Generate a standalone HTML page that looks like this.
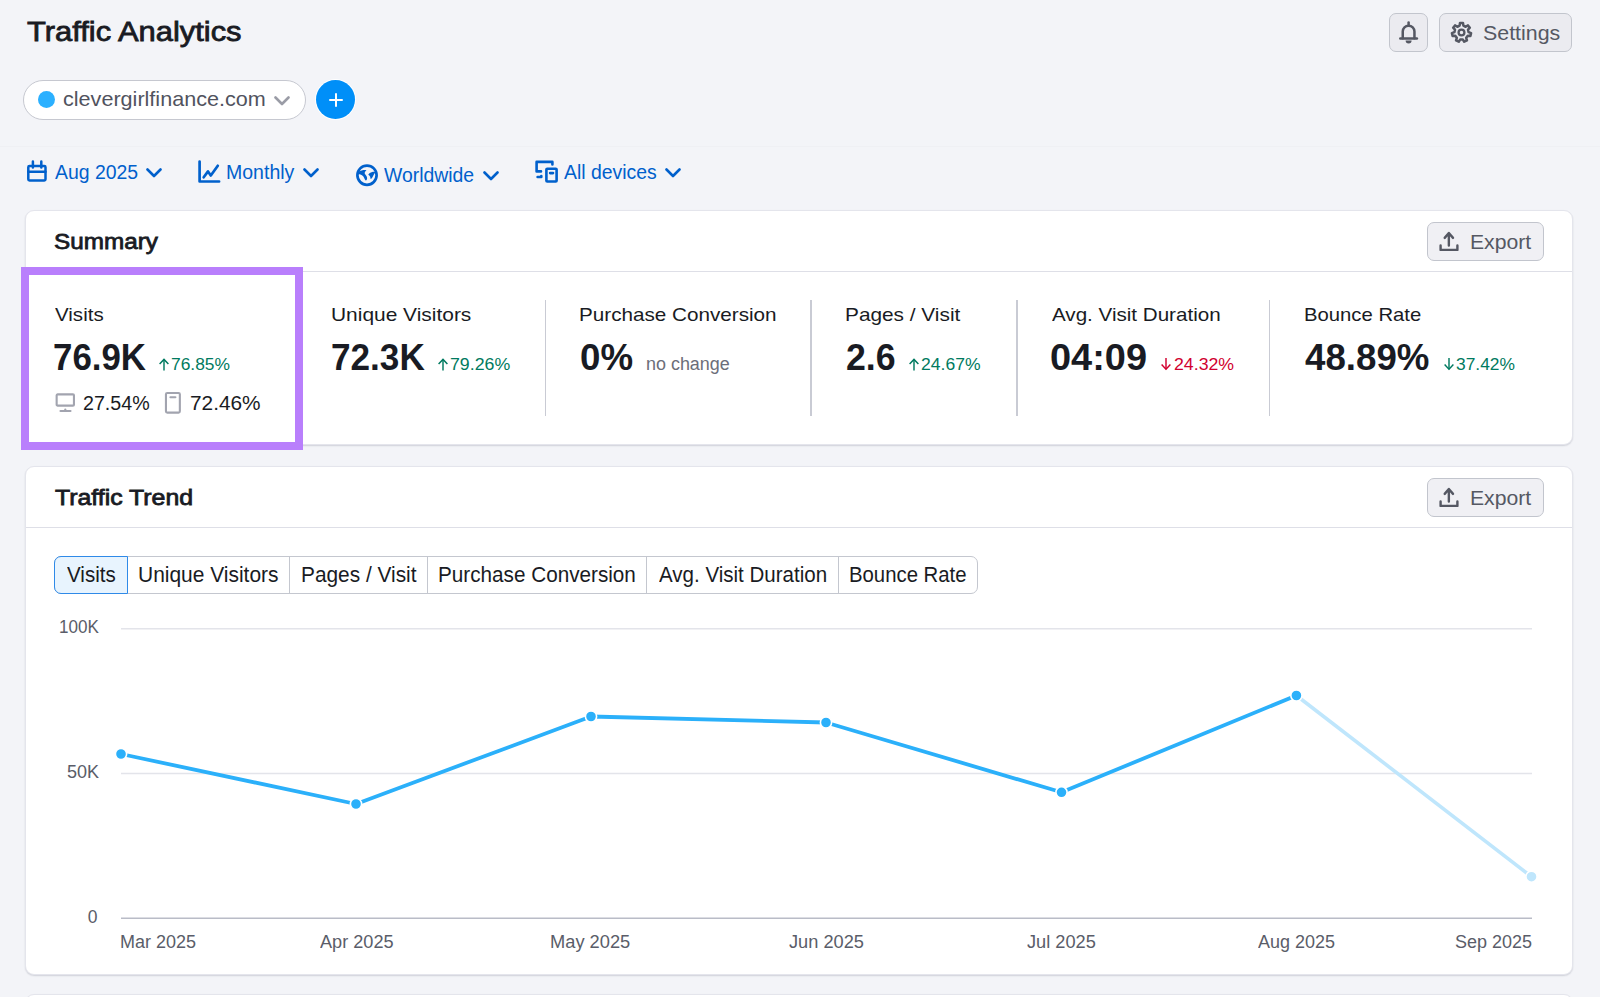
<!DOCTYPE html>
<html><head><meta charset="utf-8"><title>Traffic Analytics</title><style>
html,body{margin:0;padding:0}
body{width:1600px;height:997px;background:#f3f4f8;position:relative;overflow:hidden;font-family:"Liberation Sans",sans-serif}
.t{position:absolute;white-space:pre;line-height:1;transform-origin:0 0}
.a{position:absolute;display:block}
.card{position:absolute;left:25px;width:1546px;background:#fff;border:1px solid #e4e5ec;border-radius:9px;box-shadow:0 1px 1.5px rgba(30,35,60,0.16)}
.hsep{position:absolute;left:26px;width:1546px;height:1.3px;background:#dedfe7}
.vsep{position:absolute;top:300px;width:1.5px;height:116px;background:#c9cbd4}
.btn{position:absolute;background:#ebebf0;border:1.3px solid #c2c5cd;border-radius:7px;box-sizing:border-box}
</style></head><body>
<div class="a" style="left:0;top:146px;width:1600px;height:1px;background:#eff0f4"></div>
<div class="btn" style="left:1389px;top:13px;width:39px;height:39px"></div>
<div class="btn" style="left:1439px;top:13px;width:133px;height:39px"></div>
<div class="a" style="left:23px;top:79.5px;width:283px;height:40px;box-sizing:border-box;background:#fff;border:1.5px solid #c6c8d0;border-radius:20px"></div>
<div class="a" style="left:38px;top:91px;width:17px;height:17px;border-radius:50%;background:#2bb0ff"></div>
<div class="a" style="left:316px;top:80px;width:39px;height:39px;border-radius:50%;background:#008ff8;box-shadow:0 0 0 1px #fff"></div>
<div class="a" style="left:328.5px;top:98.7px;width:14.5px;height:2px;background:#fff;border-radius:1px"></div>
<div class="a" style="left:334.7px;top:92.5px;width:2px;height:14.5px;background:#fff;border-radius:1px"></div>
<svg class="a" style="left:274px;top:96px" width="16" height="10" viewBox="0 0 16 10"><path d="M1.5 1.5 L8 8 L14.5 1.5" fill="none" stroke="#9a9ca6" stroke-width="2.6" stroke-linecap="round" stroke-linejoin="round"/></svg>
<svg class="a" style="left:145.5px;top:168px" width="16" height="10" viewBox="0 0 16 10"><path d="M1.5 1.5 L8 8 L14.5 1.5" fill="none" stroke="#0060cc" stroke-width="2.6" stroke-linecap="round" stroke-linejoin="round"/></svg>
<svg class="a" style="left:303px;top:168px" width="16" height="10" viewBox="0 0 16 10"><path d="M1.5 1.5 L8 8 L14.5 1.5" fill="none" stroke="#0060cc" stroke-width="2.6" stroke-linecap="round" stroke-linejoin="round"/></svg>
<svg class="a" style="left:483px;top:171px" width="16" height="10" viewBox="0 0 16 10"><path d="M1.5 1.5 L8 8 L14.5 1.5" fill="none" stroke="#0060cc" stroke-width="2.6" stroke-linecap="round" stroke-linejoin="round"/></svg>
<svg class="a" style="left:665px;top:168px" width="16" height="10" viewBox="0 0 16 10"><path d="M1.5 1.5 L8 8 L14.5 1.5" fill="none" stroke="#0060cc" stroke-width="2.6" stroke-linecap="round" stroke-linejoin="round"/></svg>
<div class="card" style="top:210px;height:233px"></div>
<div class="hsep" style="top:271px"></div>
<div class="btn" style="left:1427px;top:222px;width:117px;height:39px;background:#f0f0f4"></div>
<div class="vsep" style="left:544.5px"></div>
<div class="vsep" style="left:810px"></div>
<div class="vsep" style="left:1016px"></div>
<div class="vsep" style="left:1268.5px"></div>
<div class="a" style="left:21px;top:267px;width:266px;height:167px;border:8px solid #b97ffc"></div>
<div class="card" style="top:466px;height:507px"></div>
<div class="hsep" style="top:527px"></div>
<div class="btn" style="left:1427px;top:478px;width:117px;height:39px;background:#f0f0f4"></div>
<div class="a" style="left:54px;top:556px;width:924px;height:38px;box-sizing:border-box;border:1px solid #c4c7cf;border-radius:7px"></div>
<div class="a" style="left:54px;top:556px;width:74px;height:38px;box-sizing:border-box;border:1.5px solid #2f8ae8;background:#e8f4fe;border-radius:7px 0 0 7px"></div>
<div class="a" style="left:289px;top:556px;width:1px;height:38px;background:#c4c7cf"></div>
<div class="a" style="left:427px;top:556px;width:1px;height:38px;background:#c4c7cf"></div>
<div class="a" style="left:646px;top:556px;width:1px;height:38px;background:#c4c7cf"></div>
<div class="a" style="left:838px;top:556px;width:1px;height:38px;background:#c4c7cf"></div>
<div class="card" style="top:994px;height:40px"></div>
<svg class="a" style="left:0;top:0" width="1600" height="997" viewBox="0 0 1600 997">
<line x1="121" y1="628.75" x2="1532" y2="628.75" stroke="#e3e4ea" stroke-width="1.5"/>
<line x1="121" y1="773.5" x2="1532" y2="773.5" stroke="#e3e4ea" stroke-width="1.5"/>
<line x1="121" y1="918.2" x2="1532" y2="918.2" stroke="#b9bcc7" stroke-width="1.5"/>
<polyline points="1296.4,695.5 1531.5,876.7" fill="none" stroke="#bfe6fc" stroke-width="3.6"/>
<polyline points="121,754 356,804 591,716.5 826,722.5 1061.5,792.3 1296.4,695.5" fill="none" stroke="#2bb0fa" stroke-width="3.8" stroke-linejoin="round"/>
<circle cx="121" cy="754" r="5.6" fill="#2bb0fa" stroke="#fff" stroke-width="1.6"/><circle cx="356" cy="804" r="5.6" fill="#2bb0fa" stroke="#fff" stroke-width="1.6"/><circle cx="591" cy="716.5" r="5.6" fill="#2bb0fa" stroke="#fff" stroke-width="1.6"/><circle cx="826" cy="722.5" r="5.6" fill="#2bb0fa" stroke="#fff" stroke-width="1.6"/><circle cx="1061.5" cy="792.3" r="5.6" fill="#2bb0fa" stroke="#fff" stroke-width="1.6"/><circle cx="1296.4" cy="695.5" r="5.6" fill="#2bb0fa" stroke="#fff" stroke-width="1.6"/><circle cx="1531.5" cy="876.7" r="5.6" fill="#bfe6fc" stroke="#fff" stroke-width="1.6"/></svg>
<svg class="a" style="left:1398px;top:20px" width="22" height="25" viewBox="0 0 22 25"><g fill="none" stroke="#555863" stroke-width="2.5" stroke-linecap="round"><path d="M10.6 2.4 V4.2"/><path d="M4.75 18.2 V11.6 A5.85 5.85 0 0 1 16.45 11.6 V18.2"/><path d="M2.3 18.5 H18.9"/></g><path d="M7.6 20.6 A3 2.9 0 0 0 13.6 20.6 Z" fill="#555863"/></svg><svg class="a" style="left:1449.5px;top:21.25px" width="23" height="23" viewBox="0 0 23 23"><path d="M9.60 4.66 L10.00 2.02 L13.00 2.02 L13.40 4.66 L15.67 5.75 L17.98 4.41 L19.85 6.76 L18.03 8.72 L18.59 11.17 L21.08 12.15 L20.41 15.07 L17.75 14.87 L16.18 16.84 L16.97 19.39 L14.26 20.69 L12.76 18.49 L10.24 18.49 L8.74 20.69 L6.03 19.39 L6.82 16.84 L5.25 14.87 L2.59 15.07 L1.92 12.15 L4.41 11.17 L4.97 8.72 L3.15 6.76 L5.02 4.41 L7.33 5.75 Z" fill="none" stroke="#555863" stroke-width="2.5" stroke-linejoin="round"/><circle cx="11.5" cy="11.5" r="2.9" fill="none" stroke="#555863" stroke-width="2.3"/></svg><svg class="a" style="left:26px;top:159px" width="22" height="24" viewBox="0 0 22 24"><g fill="none" stroke="#0060cc" stroke-width="2.5" stroke-linecap="round"><rect x="2.3" y="7.1" width="17.2" height="14.3" rx="1.2"/><path d="M2.3 12.7 H19.5"/><path d="M6.9 2.5 V8.5 M15.3 2.5 V8.5"/></g></svg><svg class="a" style="left:196px;top:159px" width="26" height="26" viewBox="0 0 26 26"><g fill="none" stroke="#0060cc" stroke-width="2.7" stroke-linecap="round" stroke-linejoin="round"><path d="M3.6 2.6 V22.5 H23.1"/><path d="M7.7 18.3 L12 12.4 L14.8 16.5 L21.8 6.8"/></g></svg><svg class="a" style="left:355px;top:163px" width="24" height="24" viewBox="0 0 24 24"><circle cx="12" cy="12.2" r="9.6" fill="none" stroke="#0060cc" stroke-width="2.7"/><path d="M3.5 8.6 C6 7.6 8.5 6.8 11.5 7.2 C10.2 8.3 9.4 9.4 9.8 10.8 C10.8 12.2 12 13.2 12.1 15 C12.1 16.3 11.6 17.6 10.8 17.6 C10 17.3 9.3 15.2 8.4 13.6 C7.2 11.7 5 11.2 3.2 11.2 Z" fill="#0060cc"/><path d="M13.3 11.8 C14 10.3 15.4 9.3 17.2 8.9 C18.6 8.6 19.8 8.7 20.3 9.2 C19.3 10.6 18.5 12.4 17.6 13.9 C17 15.1 16.2 15.9 15.6 15.9 C15.2 14.6 15.6 13.2 13.3 11.8 Z" fill="#0060cc"/></svg><svg class="a" style="left:534px;top:159px" width="26" height="26" viewBox="0 0 26 26"><g fill="none" stroke="#0060cc" stroke-width="2.6" stroke-linecap="round" stroke-linejoin="round"><path d="M18.4 5.4 V2.9 H2.6 V12.4 H7"/><path d="M3.6 18 H7.3 V17"/><rect x="12.4" y="9.7" width="10.2" height="12.8" rx="0.8"/><path d="M16.1 14.1 H19"/></g></svg><svg class="a" style="left:1438px;top:231px" width="22" height="22" viewBox="0 0 22 22"><g fill="none" stroke="#555863" stroke-width="2.4" stroke-linecap="round" stroke-linejoin="round"><path d="M10.85 14.6 V2.2 M6.7 6.9 L10.85 2 L15 6.9"/><path d="M2.6 14.4 V18.9 H19.4 V14.4"/></g></svg><svg class="a" style="left:1438px;top:487px" width="22" height="22" viewBox="0 0 22 22"><g fill="none" stroke="#555863" stroke-width="2.4" stroke-linecap="round" stroke-linejoin="round"><path d="M10.85 14.6 V2.2 M6.7 6.9 L10.85 2 L15 6.9"/><path d="M2.6 14.4 V18.9 H19.4 V14.4"/></g></svg><svg class="a" style="left:54px;top:391px" width="23" height="23" viewBox="0 0 23 23"><g fill="none" stroke="#a2a4af" stroke-width="2.1" stroke-linecap="round" stroke-linejoin="round"><rect x="2.65" y="3.35" width="17.3" height="11.3" rx="1"/><path d="M6.5 20 H16.5"/><path d="M11.3 18.6 V20"/></g></svg><svg class="a" style="left:163px;top:390px" width="20" height="26" viewBox="0 0 20 26"><g fill="none" stroke="#a2a4af" stroke-width="2.1" stroke-linecap="round" stroke-linejoin="round"><rect x="2.95" y="3.05" width="13.9" height="19.6" rx="1.3"/><path d="M7.4 7.2 H12.4"/></g></svg><svg class="a" style="left:159.1px;top:357.5px" width="10" height="13" viewBox="0 0 10 13"><g fill="none" stroke="#007a60" stroke-width="1.45" stroke-linecap="butt" stroke-linejoin="miter"><path d="M5 1.2 V12.5"/><path d="M0.6 6.1 L5 1.4 L9.4 6.1"/></g></svg><svg class="a" style="left:437.6px;top:357.5px" width="10" height="13" viewBox="0 0 10 13"><g fill="none" stroke="#007a60" stroke-width="1.45" stroke-linecap="butt" stroke-linejoin="miter"><path d="M5 1.2 V12.5"/><path d="M0.6 6.1 L5 1.4 L9.4 6.1"/></g></svg><svg class="a" style="left:909.3px;top:357.5px" width="10" height="13" viewBox="0 0 10 13"><g fill="none" stroke="#007a60" stroke-width="1.45" stroke-linecap="butt" stroke-linejoin="miter"><path d="M5 1.2 V12.5"/><path d="M0.6 6.1 L5 1.4 L9.4 6.1"/></g></svg><svg class="a" style="left:1161.4px;top:357.5px" width="10" height="13" viewBox="0 0 10 13"><g fill="none" stroke="#d1002f" stroke-width="1.45" stroke-linecap="butt" stroke-linejoin="miter"><path d="M5 0 V11.3"/><path d="M0.6 6.6 L5 11.3 L9.4 6.6"/></g></svg><svg class="a" style="left:1443.6px;top:357.5px" width="10" height="13" viewBox="0 0 10 13"><g fill="none" stroke="#007a60" stroke-width="1.45" stroke-linecap="butt" stroke-linejoin="miter"><path d="M5 0 V11.3"/><path d="M0.6 6.6 L5 11.3 L9.4 6.6"/></g></svg>
<span class="t" style="left:27.2px;top:18.3px;font-size:27.5px;transform:scaleX(1.123);color:#191b23;font-weight:400;-webkit-text-stroke:0.8px #191b23">Traffic Analytics</span><span class="t" style="left:63.1px;top:90.4px;font-size:19.75px;transform:scaleX(1.093);color:#51535e;font-weight:400">clevergirlfinance.com</span><span class="t" style="left:54.5px;top:162.0px;font-size:20.25px;transform:scaleX(0.959);color:#0060cc;font-weight:400">Aug 2025</span><span class="t" style="left:225.5px;top:162.0px;font-size:20.25px;transform:scaleX(0.964);color:#0060cc;font-weight:400">Monthly</span><span class="t" style="left:384.0px;top:164.0px;font-size:21.0px;transform:scaleX(0.923);color:#0060cc;font-weight:400">Worldwide</span><span class="t" style="left:564.0px;top:162.0px;font-size:20.25px;transform:scaleX(0.958);color:#0060cc;font-weight:400">All devices</span><span class="t" style="left:1482.7px;top:21.8px;font-size:21.0px;transform:scaleX(1.018);color:#555863;font-weight:400">Settings</span><span class="t" style="left:53.8px;top:230.5px;font-size:22.0px;transform:scaleX(1.104);color:#191b23;font-weight:400;-webkit-text-stroke:0.8px #191b23">Summary</span><span class="t" style="left:1470.2px;top:231.8px;font-size:20.5px;transform:scaleX(1.033);color:#555863;font-weight:400">Export</span><span class="t" style="left:55.0px;top:305.5px;font-size:18.5px;transform:scaleX(1.109);color:#191b23;font-weight:400">Visits</span><span class="t" style="left:53.0px;top:340.0px;font-size:36.0px;transform:scaleX(0.968);color:#191b23;font-weight:700">76.9K</span><span class="t" style="left:171.2px;top:356.5px;font-size:16.75px;transform:scaleX(1.038);color:#007a60;font-weight:400">76.85%</span><span class="t" style="left:82.5px;top:392.7px;font-size:20.5px;transform:scaleX(0.959);color:#191b23;font-weight:400">27.54%</span><span class="t" style="left:189.7px;top:392.7px;font-size:20.5px;transform:scaleX(1.015);color:#191b23;font-weight:400">72.46%</span><span class="t" style="left:330.7px;top:305.5px;font-size:18.5px;transform:scaleX(1.131);color:#191b23;font-weight:400">Unique Visitors</span><span class="t" style="left:330.7px;top:340.0px;font-size:36.0px;transform:scaleX(0.976);color:#191b23;font-weight:700">72.3K</span><span class="t" style="left:449.7px;top:356.5px;font-size:16.75px;transform:scaleX(1.06);color:#007a60;font-weight:400">79.26%</span><span class="t" style="left:579.2px;top:305.5px;font-size:18.5px;transform:scaleX(1.117);color:#191b23;font-weight:400">Purchase Conversion</span><span class="t" style="left:580.2px;top:340.0px;font-size:36.0px;transform:scaleX(1.02);color:#191b23;font-weight:700">0%</span><span class="t" style="left:645.5px;top:354.5px;font-size:18.0px;transform:scaleX(0.996);color:#6c6e79;font-weight:400">no change</span><span class="t" style="left:845.2px;top:305.5px;font-size:18.5px;transform:scaleX(1.125);color:#191b23;font-weight:400">Pages / Visit</span><span class="t" style="left:846.2px;top:340.0px;font-size:36.0px;transform:scaleX(0.992);color:#191b23;font-weight:700">2.6</span><span class="t" style="left:921.4px;top:356.5px;font-size:16.75px;transform:scaleX(1.047);color:#007a60;font-weight:400">24.67%</span><span class="t" style="left:1052.3px;top:305.5px;font-size:18.5px;transform:scaleX(1.113);color:#191b23;font-weight:400">Avg. Visit Duration</span><span class="t" style="left:1050.3px;top:340.0px;font-size:36.0px;transform:scaleX(1.054);color:#191b23;font-weight:700">04:09</span><span class="t" style="left:1173.5px;top:356.5px;font-size:16.75px;transform:scaleX(1.058);color:#d1002f;font-weight:400">24.32%</span><span class="t" style="left:1303.7px;top:305.5px;font-size:18.5px;transform:scaleX(1.096);color:#191b23;font-weight:400">Bounce Rate</span><span class="t" style="left:1304.7px;top:340.0px;font-size:36.0px;transform:scaleX(1.019);color:#191b23;font-weight:700">48.89%</span><span class="t" style="left:1455.7px;top:356.5px;font-size:16.75px;transform:scaleX(1.038);color:#007a60;font-weight:400">37.42%</span><span class="t" style="left:55.0px;top:486.6px;font-size:22.25px;transform:scaleX(1.116);color:#191b23;font-weight:400;-webkit-text-stroke:0.8px #191b23">Traffic Trend</span><span class="t" style="left:66.9px;top:565.4px;font-size:21.25px;transform:scaleX(0.966);color:#191b23;font-weight:400">Visits</span><span class="t" style="left:137.7px;top:565.4px;font-size:21.25px;transform:scaleX(0.986);color:#191b23;font-weight:400">Unique Visitors</span><span class="t" style="left:300.6px;top:565.4px;font-size:21.25px;transform:scaleX(0.981);color:#191b23;font-weight:400">Pages / Visit</span><span class="t" style="left:437.6px;top:565.4px;font-size:21.25px;transform:scaleX(0.974);color:#191b23;font-weight:400">Purchase Conversion</span><span class="t" style="left:659.1px;top:565.4px;font-size:21.25px;transform:scaleX(0.966);color:#191b23;font-weight:400">Avg. Visit Duration</span><span class="t" style="left:849.0px;top:565.4px;font-size:21.25px;transform:scaleX(0.957);color:#191b23;font-weight:400">Bounce Rate</span><span class="t" style="left:59.1px;top:618.4px;font-size:18.0px;transform:scaleX(0.948);color:#5a5d69;font-weight:400">100K</span><span class="t" style="left:66.8px;top:763.3px;font-size:18.5px;transform:scaleX(0.974);color:#5a5d69;font-weight:400">50K</span><span class="t" style="left:87.7px;top:908.6px;font-size:17.5px;transform:scaleX(1.0);color:#5a5d69;font-weight:400">0</span><span class="t" style="left:120.0px;top:934.2px;font-size:17.5px;transform:scaleX(1.028);color:#5a5d69;font-weight:400">Mar 2025</span><span class="t" style="left:319.8px;top:934.2px;font-size:17.5px;transform:scaleX(1.036);color:#5a5d69;font-weight:400">Apr 2025</span><span class="t" style="left:550.0px;top:934.2px;font-size:17.5px;transform:scaleX(1.044);color:#5a5d69;font-weight:400">May 2025</span><span class="t" style="left:788.8px;top:934.2px;font-size:17.5px;transform:scaleX(1.041);color:#5a5d69;font-weight:400">Jun 2025</span><span class="t" style="left:1026.6px;top:934.2px;font-size:17.5px;transform:scaleX(1.04);color:#5a5d69;font-weight:400">Jul 2025</span><span class="t" style="left:1258.4px;top:934.2px;font-size:17.5px;transform:scaleX(1.027);color:#5a5d69;font-weight:400">Aug 2025</span><span class="t" style="left:1455.0px;top:934.2px;font-size:17.5px;transform:scaleX(1.027);color:#5a5d69;font-weight:400">Sep 2025</span><span class="t" style="left:1470.2px;top:487.8px;font-size:20.5px;transform:scaleX(1.033);color:#555863">Export</span>
</body></html>
